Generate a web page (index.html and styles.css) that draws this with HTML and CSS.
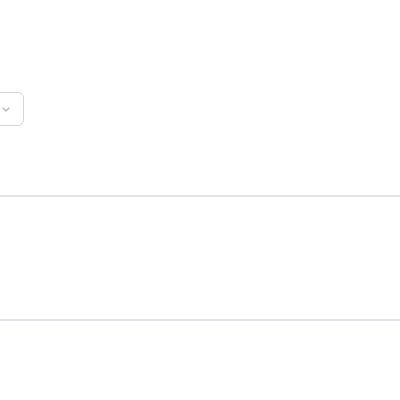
FILE: index.html
```html
<!DOCTYPE html>
<html>
<head>
<meta charset="utf-8">
<link rel="stylesheet" href="styles.css">
</head>
<body>
<div class="page">
  <div class="toolbar">
    <div class="select">
      <svg class="chev" width="8" height="5" viewBox="0 0 8 5"><path d="M1 1 L4 4 L7 1" fill="none" stroke="#b4b4bc" stroke-width="1.2" stroke-linecap="round" stroke-linejoin="round"/></svg>
    </div>
  </div>
  <div class="divider first"></div>
  <div class="section"></div>
  <div class="divider"></div>
</div>
</body>
</html>
```
FILE: styles.css
```css
html, body { margin: 0; padding: 0; background: #fff; font-family: "Liberation Sans", Arial, sans-serif; }
.page { width: 400px; height: 400px; overflow: hidden; }
.toolbar { padding-top: 92px; height: 34px; }
.select {
  margin-left: -76px;
  width: 85px;
  height: 32px;
  border: 1px solid #d4d4da;
  border-radius: 6px;
  display: flex;
  align-items: center;
  justify-content: flex-end;
  padding-right: 13px;
  box-sizing: content-box;
}
.chev { display: block; margin-top: 1px; }
.divider { height: 2px; background: #e3e2e9; }
.first { margin-top: 69px; }
.section { height: 122px; }
```
